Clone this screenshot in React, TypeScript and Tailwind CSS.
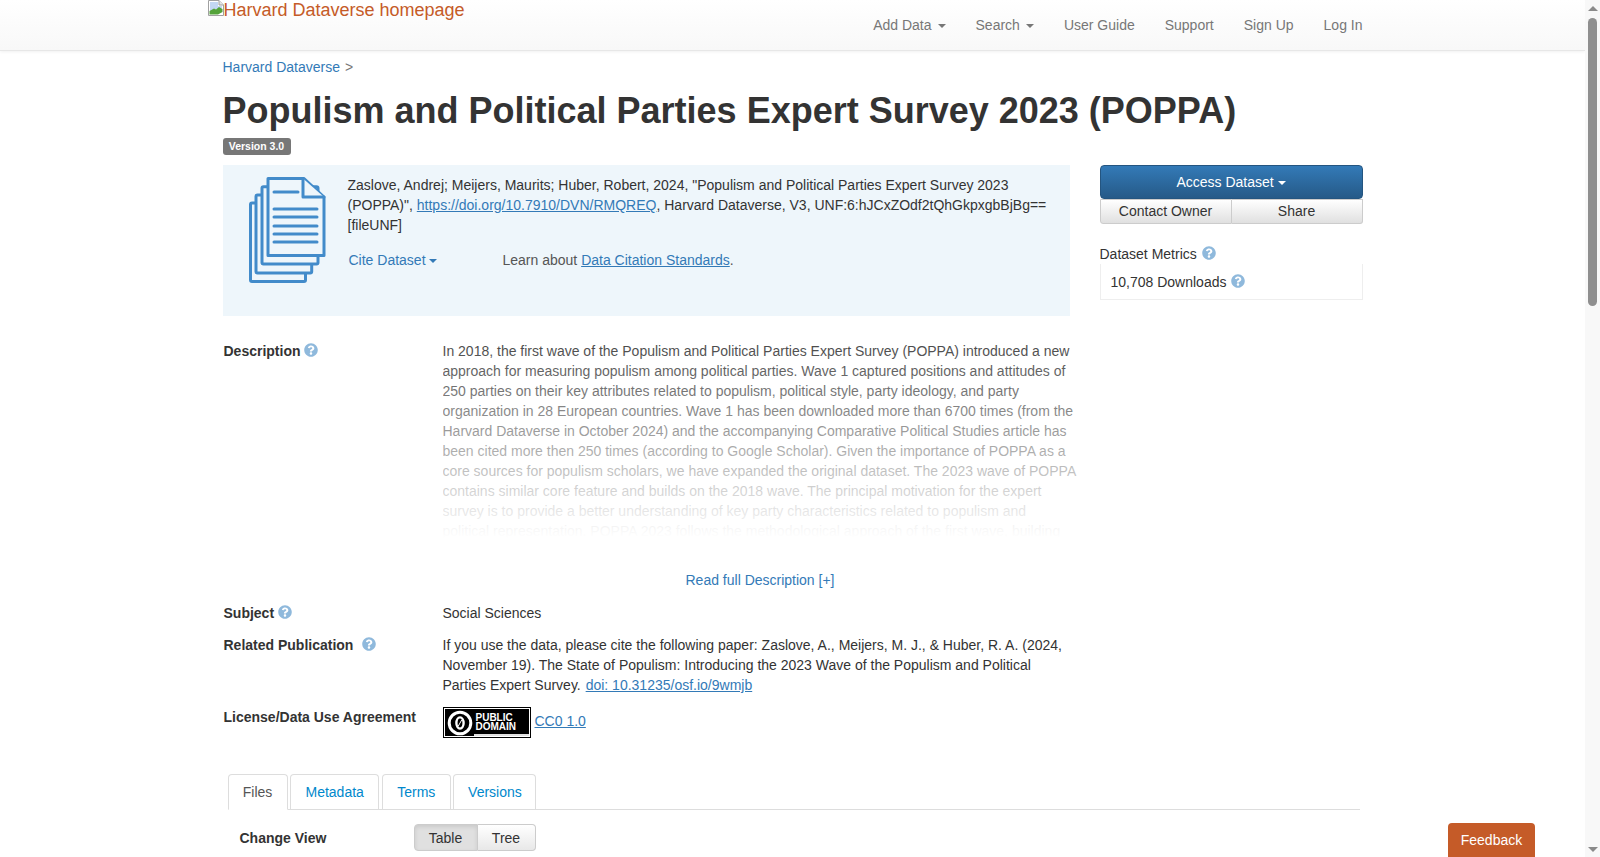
import React from 'react';
import { FaQuestionCircle } from 'react-icons/fa';

const Caret = () => (
  <span className="inline-block align-middle w-0 h-0 border-x-4 border-x-transparent border-t-4 border-t-current" />
);

const Help = ({ className = '' }: { className?: string }) => (
  <FaQuestionCircle className={`inline-block text-[14px] text-[#8fb9dc] align-[-1px] ${className}`} />
);

const BrokenImage = () => (
  <svg width="16" height="16" viewBox="0 0 16 16" className="shrink-0">
    <path d="M0.5 0.5H11L15.5 5V15.5H0.5Z" fill="#fff" stroke="#a0a0a0" />
    <path d="M2 2H10V6H14V8L2 11Z" fill="#c3d7f2" />
    <path d="M1.5 14.5V11L6 8.5L8 9.5L11 7L14.5 9V12L10 14.5Z" fill="#54a33a" />
    <path d="M11 0.5V5H15.5" fill="#e4e4e4" stroke="#a0a0a0" />
  </svg>
);

const CitationIcon = () => (
  <svg width="77" height="106" viewBox="0 0 77 106" fill="#eef6fb" stroke="#428bca" strokeWidth="3" strokeLinejoin="round" strokeLinecap="round" className="shrink-0">
    <rect x="1.5" y="26" width="55" height="78.5" rx="1.5" />
    <rect x="7" y="18" width="55.7" height="78" rx="1.5" />
    <rect x="13" y="9.7" width="56" height="77.3" rx="1.5" />
    <path d="M19 1.5H55L75 20V78.5H19Z" />
    <path d="M54 1.5V20H75" />
    <path d="M25 15H49M25 32H68M25 40H68M25 49H68M25 57H68M25 65H68" />
  </svg>
);

const PublicDomainBadge = () => (
  <div className="w-[88px] h-[31px] border border-black bg-white p-px flex shrink-0">
    <div className="flex-1 bg-black flex items-center pl-[2px] relative">
      <svg width="26" height="26" viewBox="0 0 26 26" className="shrink-0">
        <circle cx="13" cy="13" r="10.8" fill="#000" stroke="#fff" strokeWidth="3" />
        <ellipse cx="13" cy="13" rx="3.6" ry="5.6" fill="none" stroke="#fff" strokeWidth="2.4" />
        <path d="M15 9.5L11 16.5" stroke="#fff" strokeWidth="1" />
      </svg>
      <div className="ml-[3px] -mt-[1px] text-white font-bold text-[10px] leading-[9px]">
        <div>PUBLIC</div>
        <div>DOMAIN</div>
      </div>
      <div className="absolute left-[29px] right-0 bottom-0 h-[2px] bg-[#e0e0e0]" />
    </div>
  </div>
);

const navItems = [
  { label: 'Add Data', caret: true },
  { label: 'Search', caret: true },
  { label: 'User Guide' },
  { label: 'Support' },
  { label: 'Sign Up' },
  { label: 'Log In' },
];

const tabs = [
  { label: 'Files', width: 'w-[60px]', active: true },
  { label: 'Metadata', width: 'w-[89px]' },
  { label: 'Terms', width: 'w-[69px]' },
  { label: 'Versions', width: 'w-[83px]' },
];

const Link = ({ children }: { children: React.ReactNode }) => (
  <a className="text-[#337ab7] underline">{children}</a>
);

const Label = ({ children }: { children: React.ReactNode }) => (
  <div className="w-[220px] shrink-0 font-bold pl-px">{children}</div>
);

export default function App() {
  return (
    <div className="relative flex h-screen overflow-hidden bg-white text-[#333] text-[14px] leading-5 font-['Liberation_Sans',Arial,sans-serif]">
      <div className="flex-1 min-w-0">
        <nav className="h-[51px] border-b border-[#e7e7e7] bg-gradient-to-b from-white to-[#f8f8f8] shadow-[0_1px_3px_rgba(0,0,0,0.06)]">
          <div className="w-[1170px] mx-auto flex justify-between">
            <a className="flex items-start text-[18px] leading-[20px] text-[#c55b28]">
              <BrokenImage />
              <span>Harvard Dataverse homepage</span>
            </a>
            <ul className="flex -mr-[15px] pr-[15px] text-[#777]">
              {navItems.map(item => (
                <li key={item.label} className="px-[15px] h-[50px] flex items-center">
                  {item.label}
                  {item.caret && <span className="ml-[6px]"><Caret /></span>}
                </li>
              ))}
            </ul>
          </div>
        </nav>

        <div className="w-[1170px] mx-auto px-[15px]">
          <div className="mt-[6px]">
            <a className="text-[#337ab7]">Harvard Dataverse</a>
            <span className="text-[#777] ml-[5px]">&gt;</span>
          </div>
          <h1 className="mt-[14px] text-[36px] leading-[40px] font-bold">Populism and Political Parties Expert Survey 2023 (POPPA)</h1>
          <div className="mt-[7px] h-[17px] w-[68px] rounded-[3px] bg-[#777] text-white text-[10.5px] leading-[17px] font-bold text-center">Version 3.0</div>

          <div className="mt-[10px] flex justify-between">
            <div className="w-[847px] h-[151px] bg-[#eef6fb] flex pl-[26px] pt-[12px]">
              <CitationIcon />
              <div className="ml-[22px] -mt-[2px] w-[710px]">
                <p>
                  Zaslove, Andrej; Meijers, Maurits; Huber, Robert, 2024, "Populism and Political Parties Expert Survey 2023 (POPPA)", <Link>https://doi.org/10.7910/DVN/RMQREQ</Link>, Harvard Dataverse, V3, UNF:6:hJCxZOdf2tQhGkpxgbBjBg== [fileUNF]
                </p>
                <div className="mt-[15px] flex">
                  <a className="ml-px w-[154px] text-[#337ab7]">Cite Dataset <Caret /></a>
                  <span className="text-[#555]">Learn about <Link>Data Citation Standards</Link>.</span>
                </div>
              </div>
            </div>

            <div className="w-[263px]">
              <button className="block w-full h-[34px] rounded-[4px] border border-[#245580] bg-gradient-to-b from-[#337ab7] to-[#265a88] text-white text-center">
                Access Dataset <Caret />
              </button>
              <div className="flex h-[25px]">
                <button className="w-[132px] pb-[2px] rounded-bl-[3px] border border-[#ccc] bg-gradient-to-b from-white to-[#e0e0e0] text-center">Contact Owner</button>
                <button className="flex-1 pb-[2px] rounded-br-[3px] border border-l-0 border-[#ccc] bg-gradient-to-b from-white to-[#e0e0e0] text-center">Share</button>
              </div>
              <div className="mt-[20px]">Dataset Metrics <Help className="ml-px" /></div>
              <div className="h-[36px] border border-t-0 border-[#eee] pl-[10px] pt-[8px]">10,708 Downloads <Help className="ml-px" /></div>
            </div>
          </div>

          <div className="mt-[25px] flex">
            <Label>Description <Help /></Label>
            <div className="relative w-[635px] h-[197px] overflow-hidden">
              <p>
                In 2018, the first wave of the Populism and Political Parties Expert Survey (POPPA) introduced a new approach for measuring populism among political parties. Wave 1 captured positions and attitudes of 250 parties on their key attributes related to populism, political style, party ideology, and party organization in 28 European countries. Wave 1 has been downloaded more than 6700 times (from the Harvard Dataverse in October 2024) and the accompanying Comparative Political Studies article has been cited more then 250 times (according to Google Scholar). Given the importance of POPPA as a core sources for populism scholars, we have expanded the original dataset. The 2023 wave of POPPA contains similar core feature and builds on the 2018 wave. The principal motivation for the expert survey is to provide a better understanding of key party characteristics related to populism and<br />political representation. POPPA 2023 follows the methodological approach of the first wave, building
              </p>
              <div className="absolute inset-0 bg-gradient-to-b from-white/10 to-white" />
            </div>
          </div>

          <div className="mt-[32px] ml-[220px] w-[635px] text-center">
            <a className="text-[#337ab7]">Read full Description [+]</a>
          </div>

          <div className="mt-[13px] flex">
            <Label>Subject <Help /></Label>
            <div>Social Sciences</div>
          </div>

          <div className="mt-[12px] flex">
            <Label>Related Publication <Help className="ml-[5px]" /></Label>
            <div className="w-[635px]">
              If you use the data, please cite the following paper: Zaslove, A., Meijers, M. J., &amp; Huber, R. A. (2024, November 19). The State of Populism: Introducing the 2023 Wave of the Populism and Political Parties Expert Survey. <span className="ml-px"><Link>doi: 10.31235/osf.io/9wmjb</Link></span>
            </div>
          </div>

          <div className="mt-[12px] flex">
            <Label>License/Data Use Agreement</Label>
            <div className="flex items-center gap-[4px] h-[31px]">
              <PublicDomainBadge />
              <div className="-mt-[4px]"><Link>CC0 1.0</Link></div>
            </div>
          </div>

          <div className="mt-[36px] ml-[5px] mr-[3px] flex gap-[2.67px] h-[36px] border-b border-[#ddd]">
            {tabs.map(tab => (
              <a
                key={tab.label}
                className={
                  tab.active
                    ? `${tab.width} h-[36px] text-center pt-[7px] rounded-t-[4px] border border-[#ddd] border-b-white bg-white text-[#555]`
                    : `${tab.width} h-[35px] text-center pt-[7px] rounded-t-[4px] border border-b-0 border-[#ddd] text-[#0088cc]`
                }
              >
                {tab.label}
              </a>
            ))}
          </div>

          <div className="mt-[14px] flex items-center">
            <div className="w-[174px] ml-[17px] font-bold">Change View</div>
            <div className="flex h-[27px]">
              <button className="w-[64px] rounded-l-[4px] border border-[#ccc] bg-[#e0e0e0] shadow-[inset_0_2px_4px_rgba(0,0,0,0.1)]">Table</button>
              <button className="w-[58px] rounded-r-[4px] border border-l-0 border-[#ccc] bg-gradient-to-b from-white to-[#e8e8e8]">Tree</button>
            </div>
          </div>
        </div>
      </div>

      {/* scrollbar */}
      <div className="w-[15px] shrink-0 h-full bg-[#f8f8f8] flex flex-col items-center">
        <span className="mt-[6px] w-0 h-0 border-x-[5px] border-x-transparent border-b-[5px] border-b-[#8a8a8a]" />
        <div className="mt-[7px] w-[9px] h-[288px] rounded-full bg-[#8f8f8f]" />
        <span className="mt-auto mb-[5px] w-0 h-0 border-x-[5px] border-x-transparent border-t-[5px] border-t-[#8a8a8a]" />
      </div>

      <a className="absolute left-[1448px] bottom-0 h-[34px] w-[87px] rounded-t-[4px] bg-[#c55b28] text-white text-center leading-[34px]">Feedback</a>
    </div>
  );
}
